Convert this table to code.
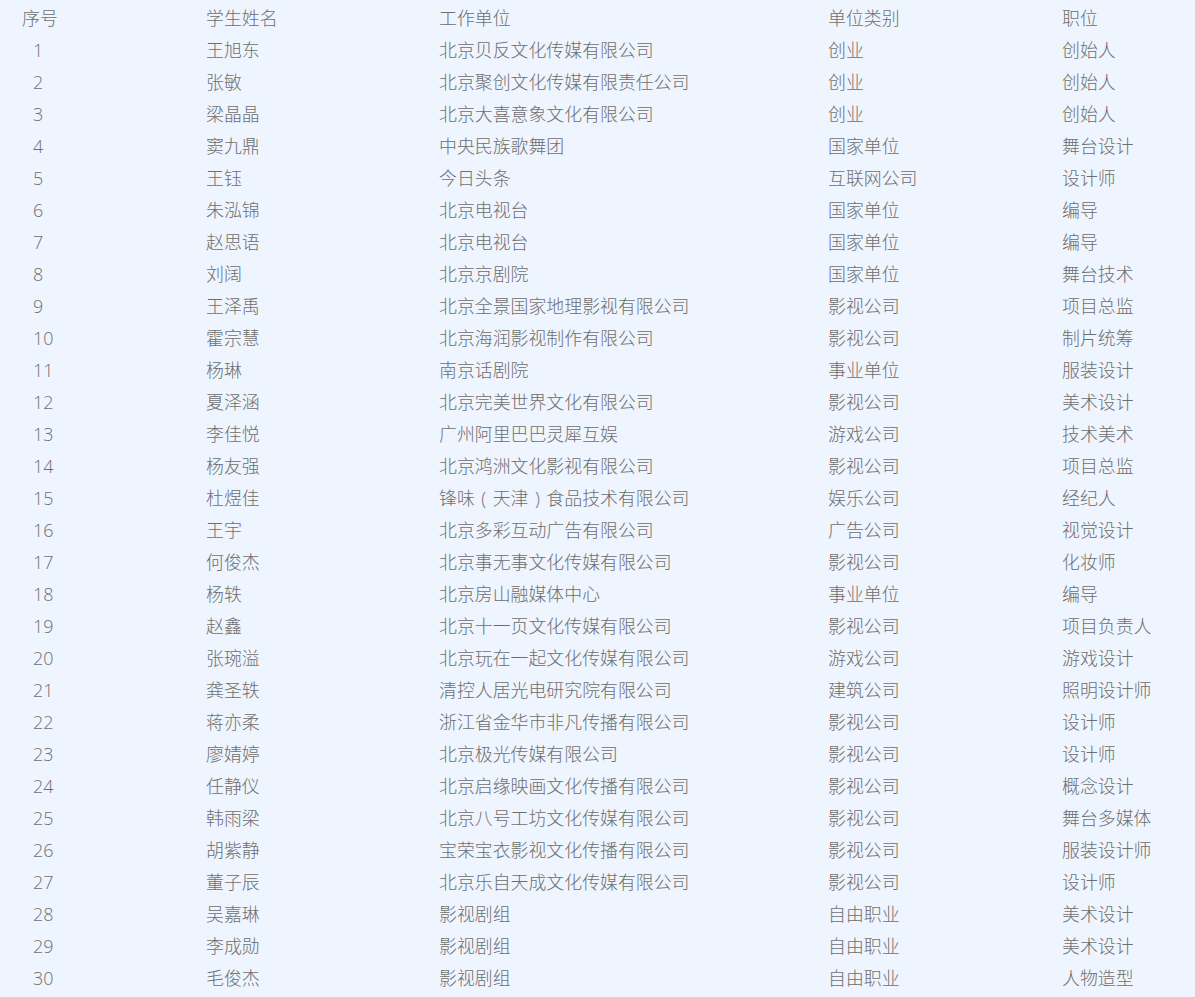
import type { ReactNode } from "react";

const Paren = ({ c }: { c: string }) => (
  <span className="inline-block w-[1em] text-center">{c}</span>
);

const rows: [string, ReactNode, string, string][] = [
  ["王旭东", "北京贝反文化传媒有限公司", "创业", "创始人"],
  ["张敏", "北京聚创文化传媒有限责任公司", "创业", "创始人"],
  ["梁晶晶", "北京大喜意象文化有限公司", "创业", "创始人"],
  ["窦九鼎", "中央民族歌舞团", "国家单位", "舞台设计"],
  ["王钰", "今日头条", "互联网公司", "设计师"],
  ["朱泓锦", "北京电视台", "国家单位", "编导"],
  ["赵思语", "北京电视台", "国家单位", "编导"],
  ["刘阔", "北京京剧院", "国家单位", "舞台技术"],
  ["王泽禹", "北京全景国家地理影视有限公司", "影视公司", "项目总监"],
  ["霍宗慧", "北京海润影视制作有限公司", "影视公司", "制片统筹"],
  ["杨琳", "南京话剧院", "事业单位", "服装设计"],
  ["夏泽涵", "北京完美世界文化有限公司", "影视公司", "美术设计"],
  ["李佳悦", "广州阿里巴巴灵犀互娱", "游戏公司", "技术美术"],
  ["杨友强", "北京鸿洲文化影视有限公司", "影视公司", "项目总监"],
  [
    "杜煜佳",
    <>
      锋味<Paren c="(" />天津<Paren c=")" />食品技术有限公司
    </>,
    "娱乐公司",
    "经纪人",
  ],
  ["王宇", "北京多彩互动广告有限公司", "广告公司", "视觉设计"],
  ["何俊杰", "北京事无事文化传媒有限公司", "影视公司", "化妆师"],
  ["杨轶", "北京房山融媒体中心", "事业单位", "编导"],
  ["赵鑫", "北京十一页文化传媒有限公司", "影视公司", "项目负责人"],
  ["张琬溢", "北京玩在一起文化传媒有限公司", "游戏公司", "游戏设计"],
  ["龚圣轶", "清控人居光电研究院有限公司", "建筑公司", "照明设计师"],
  ["蒋亦柔", "浙江省金华市非凡传播有限公司", "影视公司", "设计师"],
  ["廖婧婷", "北京极光传媒有限公司", "影视公司", "设计师"],
  ["任静仪", "北京启缘映画文化传播有限公司", "影视公司", "概念设计"],
  ["韩雨梁", "北京八号工坊文化传媒有限公司", "影视公司", "舞台多媒体"],
  ["胡紫静", "宝荣宝衣影视文化传播有限公司", "影视公司", "服装设计师"],
  ["董子辰", "北京乐自天成文化传媒有限公司", "影视公司", "设计师"],
  ["吴嘉琳", "影视剧组", "自由职业", "美术设计"],
  ["李成勋", "影视剧组", "自由职业", "美术设计"],
  ["毛俊杰", "影视剧组", "自由职业", "人物造型"],
];

const cols = "grid grid-cols-[206px_233px_389px_234px_1fr] h-8 items-center";

const App = () => {
  return (
    <div
      className="min-h-screen w-[1195px] bg-[#eef5fe] pt-[2px] text-[17.9px] font-light leading-8 text-[#6e6e6e]"
      style={{ fontFamily: '"Open Sans", "Noto Sans CJK SC", sans-serif' }}
    >
      <div className={cols}>
        <div className="pl-[22px]">序号</div>
        <div>学生姓名</div>
        <div>工作单位</div>
        <div>单位类别</div>
        <div>职位</div>
      </div>
      {rows.map((r, i) => (
        <div key={i} className={cols}>
          <div className="pl-[33px]">{i + 1}</div>
          <div>{r[0]}</div>
          <div className="whitespace-nowrap">{r[1]}</div>
          <div>{r[2]}</div>
          <div>{r[3]}</div>
        </div>
      ))}
    </div>
  );
};

export default App;
